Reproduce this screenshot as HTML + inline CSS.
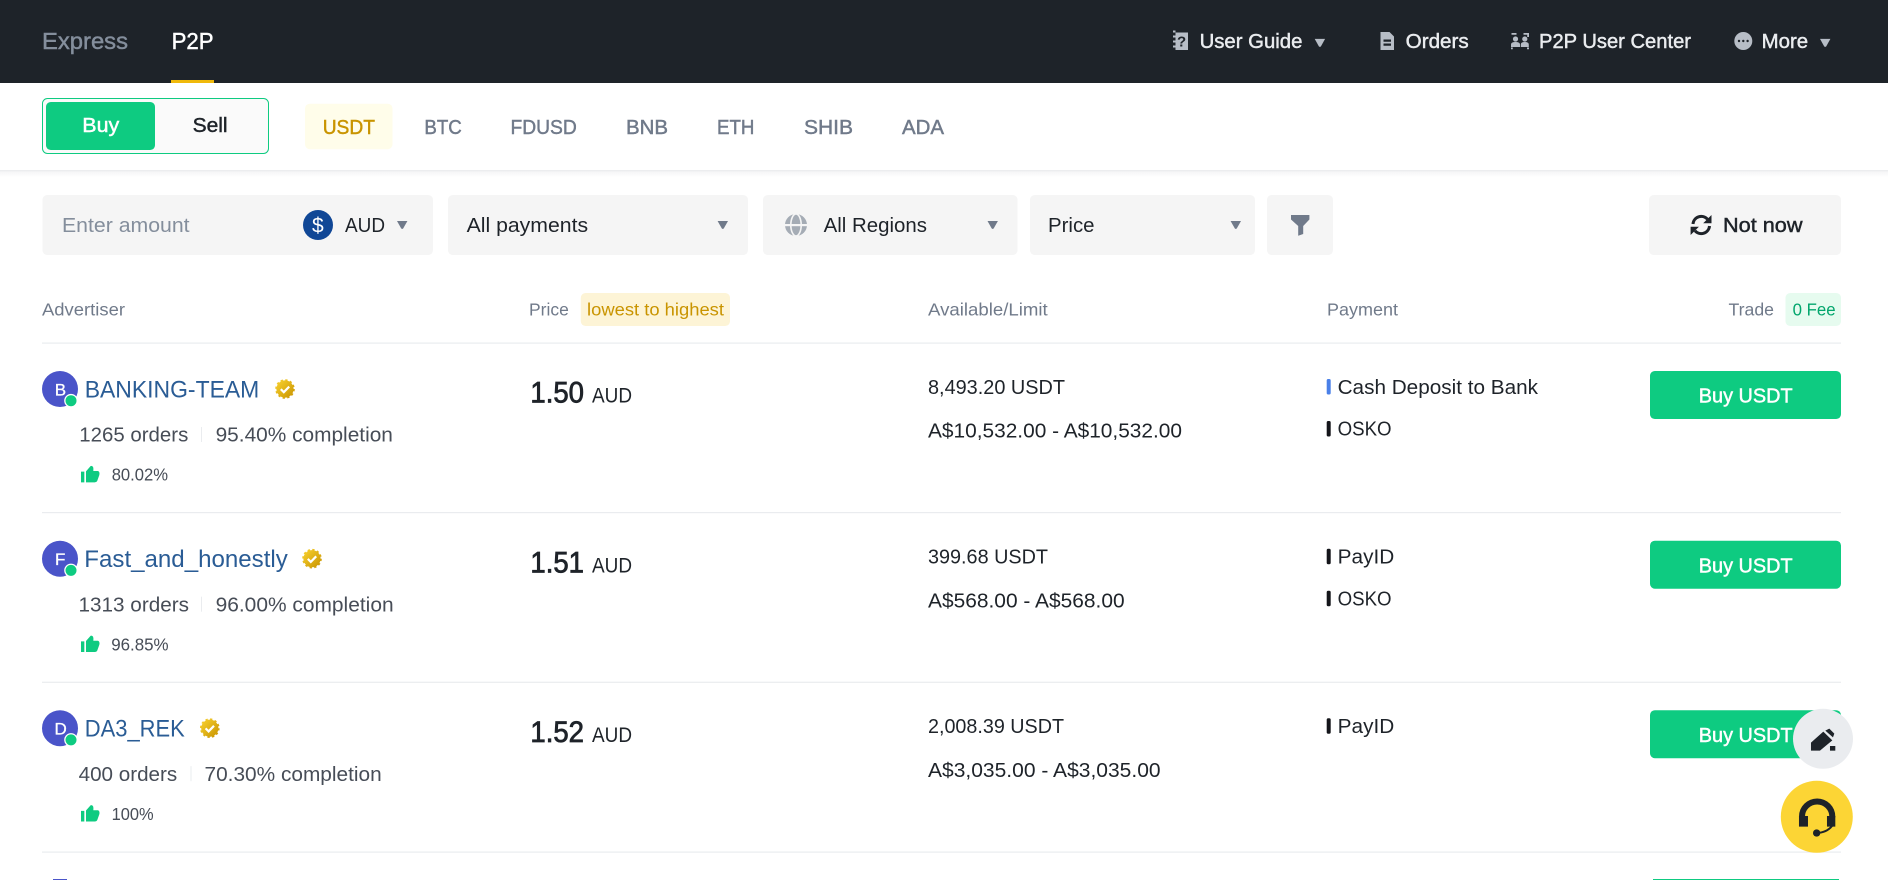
<!DOCTYPE html>
<html lang="en"><head><meta charset="utf-8"><title>P2P</title>
<style>
html,body{margin:0;padding:0;background:#fff;width:1888px;height:880px;overflow:hidden}
svg{display:block}
text{font-family:"Liberation Sans",sans-serif;white-space:pre}
.m{stroke:currentColor;stroke-width:.45}
.h{font-size:17.4px;fill:#707a8a}
.t{font-size:20px;fill:#707a8a;color:#707a8a}
.n{font-size:20px;fill:#eaecef;color:#eaecef}
.f{font-size:20px;fill:#1e2329}
.name{font-size:24px;fill:#2a5c95}
.o{font-size:20px;fill:#474d57}
.p{font-size:17.4px;fill:#474d57}
.big{font-size:30px;fill:#1e2329;color:#1e2329}
.big.m{stroke-width:.8}
.aud{font-size:21px;fill:#1e2329}
.a{font-size:20px;fill:#1e2329}
.w{font-size:20px;fill:#fff;color:#fff}
</style></head><body>
<svg width="1888" height="880" viewBox="0 0 1888 880" xmlns="http://www.w3.org/2000/svg">
<defs>
<linearGradient id="gold" x1="0" y1="0" x2="1" y2="1"><stop offset="0" stop-color="#f8d12f"/><stop offset="1" stop-color="#c99400"/></linearGradient>
<linearGradient id="sh" x1="0" y1="0" x2="0" y2="1"><stop offset="0" stop-color="#e9eaec"/><stop offset=".3" stop-color="#f6f6f7"/><stop offset="1" stop-color="#fff"/></linearGradient>
<path id="caret" d="M0 0h10.400l-4.100 7.300q-1.100 1.400-2.200 0z"/>
<g id="badge"><circle r="8.600" fill="url(#gold)"/><circle r="8.900" fill="none" stroke="url(#gold)" stroke-width="1.800" stroke-dasharray="2.300 2.360"/><path d="M-4.200 .2l3 3 5.400-5.600" fill="none" stroke="#fff" stroke-width="2.200"/></g>
<g id="thumb" transform="translate(20,360) scale(.3333)"><path fill="#0ecb81" d="M183 335h10v32h-10zM198 334L212 318Q222 316 220 333H234Q240 335 238 345L232 362Q230 367 224 367H198z"/></g>
<g id="av"><circle cx="60" cy="389" r="18" fill="#4a54c9"/><circle cx="71" cy="400.700" r="6.800" fill="#fff"/><circle cx="71" cy="400.700" r="5.500" fill="#0ecb81"/></g>
</defs>

<!-- Top nav -->
<rect width="1888" height="83" fill="#1e2329"/>
<text x="42" y="49" font-size="23" fill="#848e9c" class="m" color="#848e9c" textLength="86" lengthAdjust="spacingAndGlyphs">Express</text>
<text x="171.600" y="49" font-size="23" fill="#fff" class="m" color="#fff" textLength="42" lengthAdjust="spacingAndGlyphs">P2P</text>
<rect x="171" y="80" width="43" height="3" fill="#f0b90b"/>

<!-- book icon -->
<path fill="#b7bdc6" d="M1175.500 32.500h12.500v17.500h-12.500v-2.500h-2.500v-2h2.500v-3h-2.500v-2h2.500v-3h-2.500v-2h2.500v-3h-2.500v-2h2.500z"/>
<text x="1177" y="46.500" font-size="15" font-weight="bold" fill="#1e2329">?</text>
<text class="n m" x="1199.600" y="48" textLength="102.800" lengthAdjust="spacingAndGlyphs">User Guide</text>
<use href="#caret" x="1314.700" y="38.900" fill="#b7bdc6"/>
<!-- doc -->
<path fill="#b7bdc6" d="M1380.500 32h9l4.500 4.500V50h-13.500z"/>
<path fill="#1e2329" d="M1383.500 39.500h7.500v2.200h-7.500zM1383.500 43.500h7.500v2.200h-7.500z"/>
<text class="n m" x="1405.700" y="48" textLength="63" lengthAdjust="spacingAndGlyphs">Orders</text>
<!-- p2p center -->
<g fill="#b7bdc6"><circle cx="1515.500" cy="39" r="2.600"/><circle cx="1524.800" cy="39" r="2.600"/><path d="M1511 47v-2.500q0-2.500 4.500-2.500t4.500 2.500v2.500zM1520.800 47v-2.500q0-2.500 4-2.500t4 2.500v2.500z"/><path d="M1511.500 33h5v1.800h-5zM1523.500 33h5.500v4h-1.800v-2.200h-3.700zM1511 47.500h1.800v1.700h-1.800zM1527 47.500h2v1.700h-2z"/></g>
<text class="n m" x="1539" y="48" textLength="152" lengthAdjust="spacingAndGlyphs">P2P User Center</text>
<!-- more -->
<circle cx="1743.300" cy="41" r="9" fill="#b7bdc6"/>
<g fill="#1e2329"><circle cx="1739" cy="41" r="1.200"/><circle cx="1743.300" cy="41" r="1.200"/><circle cx="1747.600" cy="41" r="1.200"/></g>
<text class="n m" x="1761.600" y="48" textLength="46.500" lengthAdjust="spacingAndGlyphs">More</text>
<use href="#caret" x="1820" y="38.900" fill="#b7bdc6"/>

<!-- Tab row -->
<rect x="0" y="170" width="1888" height="7" fill="url(#sh)"/>
<rect x="42.500" y="98.500" width="226" height="55" rx="5" fill="#fafafa" stroke="#0ecb81"/>
<rect x="46" y="102" width="109" height="48" rx="4.800" fill="#0ecb81"/>
<text class="w m" x="82.300" y="132" textLength="37" lengthAdjust="spacingAndGlyphs">Buy</text>
<text class="f m" color="#1e2329" x="192.600" y="132" textLength="35" lengthAdjust="spacingAndGlyphs">Sell</text>
<rect x="305" y="103.700" width="87.500" height="45.500" rx="4.800" fill="#fffdea"/>
<text class="t m" style="fill:#c99400;color:#c99400" x="322.700" y="134" textLength="52.300" lengthAdjust="spacingAndGlyphs">USDT</text>
<text class="t m" x="424.400" y="134" textLength="37.400" lengthAdjust="spacingAndGlyphs">BTC</text>
<text class="t m" x="510.500" y="134" textLength="66.300" lengthAdjust="spacingAndGlyphs">FDUSD</text>
<text class="t m" x="626" y="134" textLength="42" lengthAdjust="spacingAndGlyphs">BNB</text>
<text class="t m" x="717" y="134" textLength="37.400" lengthAdjust="spacingAndGlyphs">ETH</text>
<text class="t m" x="804" y="134" textLength="49" lengthAdjust="spacingAndGlyphs">SHIB</text>
<text class="t m" x="902" y="134" textLength="42" lengthAdjust="spacingAndGlyphs">ADA</text>

<!-- Filters -->
<g fill="#f5f5f5">
<rect x="42.500" y="195" width="390.500" height="60" rx="4.800"/>
<rect x="448" y="195" width="300" height="60" rx="4.800"/>
<rect x="763" y="195" width="254.500" height="60" rx="4.800"/>
<rect x="1030" y="195" width="225" height="60" rx="4.800"/>
<rect x="1267" y="195" width="66" height="60" rx="4.800"/>
<rect x="1649" y="195" width="192" height="60" rx="4.800"/>
</g>
<text class="f" style="fill:#848e9c" x="62" y="232" textLength="127.600" lengthAdjust="spacingAndGlyphs">Enter amount</text>
<circle cx="318" cy="225" r="15" fill="#104796"/>
<text x="312" y="232.500" font-size="21" fill="#fff">$</text>
<text class="f" x="345" y="232" textLength="40" lengthAdjust="spacingAndGlyphs">AUD</text>
<use href="#caret" x="397" y="221" fill="#707a8a"/>
<text class="f" x="466.600" y="232" textLength="121.500" lengthAdjust="spacingAndGlyphs">All payments</text>
<use href="#caret" x="717.600" y="221" fill="#707a8a"/>
<circle cx="796" cy="225" r="11" fill="#a5acb5"/>
<ellipse cx="796" cy="225" rx="5.200" ry="11" fill="none" stroke="#f5f5f5" stroke-width="1.600"/>
<rect x="784" y="224" width="24" height="2.200" fill="#f5f5f5"/>
<text class="f" x="823.600" y="232" textLength="103.400" lengthAdjust="spacingAndGlyphs">All Regions</text>
<use href="#caret" x="987.500" y="221" fill="#707a8a"/>
<text class="f" x="1048" y="232" textLength="46.500" lengthAdjust="spacingAndGlyphs">Price</text>
<use href="#caret" x="1230.600" y="221" fill="#707a8a"/>
<path fill="#707a8a" d="M1291 215h18.400v4.500l-6.200 6.500v8l-5 1.700V226l-7.200-6.500z"/>
<g fill="none" stroke="#1e2329" stroke-width="3"><path d="M1693 224a8.300 8.300 0 0 1 14.500-4.800"/><path d="M1709.500 226a8.300 8.300 0 0 1-14.500 4.800"/></g>
<path fill="#1e2329" d="M1711.500 215v8.300h-8.300zM1690.600 235v-8.300h8.300z"/>
<text class="f m" color="#1e2329" x="1723" y="232" textLength="79.500" lengthAdjust="spacingAndGlyphs">Not now</text>

<!-- Table header -->
<text class="h" x="42" y="315.700" textLength="83" lengthAdjust="spacingAndGlyphs">Advertiser</text>
<text class="h" x="529" y="315.700" textLength="39.800" lengthAdjust="spacingAndGlyphs">Price</text>
<rect x="580.800" y="293" width="149.200" height="33" rx="4.800" fill="#fdf4d6"/>
<text class="h" style="fill:#c99400" x="587" y="315.700" textLength="137" lengthAdjust="spacingAndGlyphs">lowest to highest</text>
<text class="h" x="928" y="315.700" textLength="119.700" lengthAdjust="spacingAndGlyphs">Available/Limit</text>
<text class="h" x="1327" y="315.700" textLength="71" lengthAdjust="spacingAndGlyphs">Payment</text>
<text class="h" x="1728.500" y="315.700" textLength="45.500" lengthAdjust="spacingAndGlyphs">Trade</text>
<rect x="1785.500" y="293" width="55.500" height="33" rx="4.800" fill="#e6fbef"/>
<text class="h" style="fill:#03a66d" x="1792.600" y="315.700" textLength="43" lengthAdjust="spacingAndGlyphs">0 Fee</text>
<g fill="#eaecef">
<rect x="42" y="342.500" width="1799" height="1.200"/>
<rect x="42" y="512" width="1799" height="1.200"/>
<rect x="42" y="681.700" width="1799" height="1.200"/>
<rect x="42" y="851.500" width="1799" height="1.200"/>
</g>

<!-- Row 1 -->
<g>
<use href="#av"/>
<text x="54.700" y="395.500" font-size="17" fill="#fff" stroke="#fff" stroke-width=".3">B</text>
<text class="name" x="84.700" y="397.300" textLength="174.600" lengthAdjust="spacingAndGlyphs">BANKING-TEAM</text>
<use href="#badge" x="285" y="389"/>
<text class="o" x="79.300" y="441.700" textLength="109" lengthAdjust="spacingAndGlyphs">1265 orders</text>
<rect x="201" y="427" width="1" height="15" fill="#eaecef"/>
<text class="o" x="215.600" y="441.700" textLength="177.300" lengthAdjust="spacingAndGlyphs">95.40% completion</text>
<use href="#thumb"/>
<text class="p" x="111.700" y="480.700" textLength="56.300" lengthAdjust="spacingAndGlyphs">80.02%</text>
<text class="big m" x="530.400" y="402.700" textLength="53.600" lengthAdjust="spacingAndGlyphs">1.50</text>
<text class="aud" x="592" y="402.700" textLength="40" lengthAdjust="spacingAndGlyphs">AUD</text>
<text class="a" x="928" y="394" textLength="137" lengthAdjust="spacingAndGlyphs">8,493.20 USDT</text>
<text class="a" x="928" y="437.700" textLength="254" lengthAdjust="spacingAndGlyphs">A$10,532.00 - A$10,532.00</text>
<rect x="1326.700" y="379" width="4" height="15.500" rx="1.500" fill="#4a80e8"/>
<text class="a" x="1337.600" y="394" textLength="200.400" lengthAdjust="spacingAndGlyphs">Cash Deposit to Bank</text>
<rect x="1326.700" y="421" width="4" height="15.500" rx="1.500" fill="#14151a"/>
<text class="a" x="1337.600" y="435.700" textLength="54" lengthAdjust="spacingAndGlyphs">OSKO</text>
<rect x="1650" y="371" width="191" height="48" rx="4.800" fill="#0ecb81"/>
<text class="w m" x="1698.800" y="402.700" textLength="93.800" lengthAdjust="spacingAndGlyphs">Buy USDT</text>
</g>

<!-- Row 2 -->
<g transform="translate(0,169.700)">
<use href="#av"/>
<text x="55" y="395.500" font-size="17" fill="#fff" stroke="#fff" stroke-width=".3">F</text>
<text class="name" x="84.300" y="397.300" textLength="203.500" lengthAdjust="spacingAndGlyphs">Fast_and_honestly</text>
<use href="#badge" x="312" y="389"/>
<text class="o" x="78.500" y="441.700" textLength="110.500" lengthAdjust="spacingAndGlyphs">1313 orders</text>
<rect x="201" y="427" width="1" height="15" fill="#eaecef"/>
<text class="o" x="215.600" y="441.700" textLength="178" lengthAdjust="spacingAndGlyphs">96.00% completion</text>
<use href="#thumb"/>
<text class="p" x="111.200" y="480.700" textLength="57.400" lengthAdjust="spacingAndGlyphs">96.85%</text>
<text class="big m" x="530.400" y="402.700" textLength="53.600" lengthAdjust="spacingAndGlyphs">1.51</text>
<text class="aud" x="592" y="402.700" textLength="40" lengthAdjust="spacingAndGlyphs">AUD</text>
<text class="a" x="928" y="394" textLength="120" lengthAdjust="spacingAndGlyphs">399.68 USDT</text>
<text class="a" x="928" y="437.700" textLength="196.600" lengthAdjust="spacingAndGlyphs">A$568.00 - A$568.00</text>
<rect x="1326.700" y="379" width="4" height="15.500" rx="1.500" fill="#14151a"/>
<text class="a" x="1337.700" y="394" textLength="56.600" lengthAdjust="spacingAndGlyphs">PayID</text>
<rect x="1326.700" y="421" width="4" height="15.500" rx="1.500" fill="#14151a"/>
<text class="a" x="1337.600" y="435.700" textLength="54" lengthAdjust="spacingAndGlyphs">OSKO</text>
<rect x="1650" y="371" width="191" height="48" rx="4.800" fill="#0ecb81"/>
<text class="w m" x="1698.800" y="402.700" textLength="93.800" lengthAdjust="spacingAndGlyphs">Buy USDT</text>
</g>

<!-- Row 3 -->
<g transform="translate(0,339.200)">
<use href="#av"/>
<text x="54.500" y="395.500" font-size="17" fill="#fff" stroke="#fff" stroke-width=".3">D</text>
<text class="name" x="84.800" y="397.300" textLength="100" lengthAdjust="spacingAndGlyphs">DA3_REK</text>
<use href="#badge" x="209.800" y="389"/>
<text class="o" x="78.600" y="441.700" textLength="98.600" lengthAdjust="spacingAndGlyphs">400 orders</text>
<rect x="190.500" y="427" width="1" height="15" fill="#eaecef"/>
<text class="o" x="204.500" y="441.700" textLength="177.200" lengthAdjust="spacingAndGlyphs">70.30% completion</text>
<use href="#thumb"/>
<text class="p" x="111.600" y="480.700" textLength="42" lengthAdjust="spacingAndGlyphs">100%</text>
<text class="big m" x="530.400" y="402.700" textLength="53.600" lengthAdjust="spacingAndGlyphs">1.52</text>
<text class="aud" x="592" y="402.700" textLength="40" lengthAdjust="spacingAndGlyphs">AUD</text>
<text class="a" x="928" y="394" textLength="136" lengthAdjust="spacingAndGlyphs">2,008.39 USDT</text>
<text class="a" x="928" y="437.700" textLength="232.600" lengthAdjust="spacingAndGlyphs">A$3,035.00 - A$3,035.00</text>
<rect x="1326.700" y="379" width="4" height="15.500" rx="1.500" fill="#14151a"/>
<text class="a" x="1337.700" y="394" textLength="56.600" lengthAdjust="spacingAndGlyphs">PayID</text>
<rect x="1650" y="371" width="191" height="48" rx="4.800" fill="#0ecb81"/>
<text class="w m" x="1698.800" y="402.700" textLength="93.800" lengthAdjust="spacingAndGlyphs">Buy USDT</text>
</g>

<!-- Row 4 (top edge visible only) -->
<rect x="53" y="879" width="14" height="1" fill="#4a54c9"/>
<rect x="1653" y="879" width="186" height="1" fill="#0ecb81"/>

<!-- Floating buttons -->
<circle cx="1823" cy="738.800" r="30" fill="#eaecef"/>
<g transform="translate(1600,680) scale(.3333)" fill="#1e2329">
<path d="M633 212V188L670 155L697 181L660 212z"/>
<path d="M676 152L688 146L703 161L699 172z"/>
<path d="M690 198h16v14h-16z"/>
</g>
<circle cx="1816.800" cy="816.800" r="36" fill="#fcd535"/>
<g transform="translate(1600,680) scale(.3333)">
<path d="M606 412V410A45.500 45.500 0 0 1 697 410V412" fill="none" stroke="#1e2329" stroke-width="18"/>
<path fill="#1e2329" d="M597 408H624V440H597zM681 408H706V440H681z"/>
<circle cx="650" cy="459" r="11" fill="#1e2329"/>
<path d="M650 459Q680 458 696 438" fill="none" stroke="#1e2329" stroke-width="6"/>
</g>
</svg>
</body></html>
